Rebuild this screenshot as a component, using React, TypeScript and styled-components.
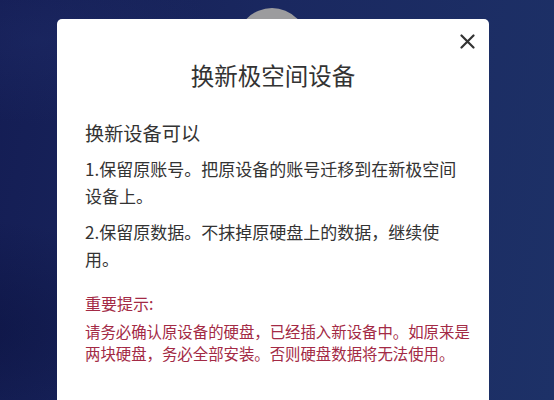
import React from "react";
import styled, { createGlobalStyle } from "styled-components";

const Global = createGlobalStyle`
  html, body { margin: 0; padding: 0; }
  body {
    width: 554px;
    height: 400px;
    overflow: hidden;
    font-family: "Noto Sans CJK SC", "Noto Sans", sans-serif;
  }
`;

const Page = styled.div`
  position: relative;
  width: 554px;
  height: 400px;
  overflow: hidden;
  box-sizing: border-box;
  padding: 19px 0 0 57px;
  background:
    radial-gradient(ellipse 320px 160px at -40px 330px, rgba(10, 16, 60, 0.55), rgba(10, 16, 60, 0) 70%),
    radial-gradient(ellipse 260px 120px at 40px 40px, rgba(34, 48, 110, 0.35), rgba(34, 48, 110, 0) 70%),
    linear-gradient(100deg, #141d54 0%, #1a2860 45%, #1d3167 100%);
`;

const Avatar = styled.div`
  position: absolute;
  left: 237px;
  top: 8px;
  width: 70px;
  height: 70px;
  border-radius: 50%;
  background: #9c9c9e;
`;

const Modal = styled.div`
  position: relative;
  width: 432px;
  height: 420px;
  box-sizing: border-box;
  background: #ffffff;
  border-radius: 5px;
  padding: 0 18px 0 28px;
  display: flex;
  flex-direction: column;
`;

const CloseButton = styled.button`
  position: absolute;
  right: 14px;
  top: 14px;
  width: 16px;
  height: 16px;
  padding: 0;
  border: none;
  background: transparent;
  display: flex;
  align-items: center;
  justify-content: center;
`;

const Title = styled.h1`
  margin: 40px 0 0;
  padding-right: 10px;
  font-size: 23.5px;
  font-weight: 400;
  line-height: 32px;
  color: #333333;
  text-align: center;
`;

const Subtitle = styled.h2`
  margin: 29px 0 0;
  font-size: 19.2px;
  font-weight: 400;
  line-height: 26px;
  color: #333333;
`;

const Item = styled.p`
  margin: 9px 0 0;
  padding-right: 6px;
  font-size: 17px;
  line-height: 27px;
  color: #333333;
`;

const Notice = styled.div`
  margin-top: 20px;
  color: #a32a45;
`;

const NoticeTitle = styled.div`
  font-size: 16px;
  line-height: 22px;
`;

const NoticeText = styled.p`
  margin: 6px 0 0;
  font-size: 15.4px;
  line-height: 22px;
`;

export default function App() {
  return (
    <>
      <Global />
      <Page>
        <Avatar />
        <Modal>
          <CloseButton aria-label="关闭">
            <svg width="15" height="15" viewBox="0 0 15 15">
              <path d="M1.5 1.5 L13.5 13.5 M13.5 1.5 L1.5 13.5" stroke="#333" strokeWidth="2.2" strokeLinecap="round" />
            </svg>
          </CloseButton>
          <Title>换新极空间设备</Title>
          <Subtitle>换新设备可以</Subtitle>
          <Item>1.保留原账号。把原设备的账号迁移到在新极空间设备上。</Item>
          <Item>2.保留原数据。不抹掉原硬盘上的数据，继续使用。</Item>
          <Notice>
            <NoticeTitle>重要提示:</NoticeTitle>
            <NoticeText>
              请务必确认原设备的硬盘，已经插入新设备中。如原来是两块硬盘，务必全部安装。否则硬盘数据将无法使用。
            </NoticeText>
          </Notice>
        </Modal>
      </Page>
    </>
  );
}
